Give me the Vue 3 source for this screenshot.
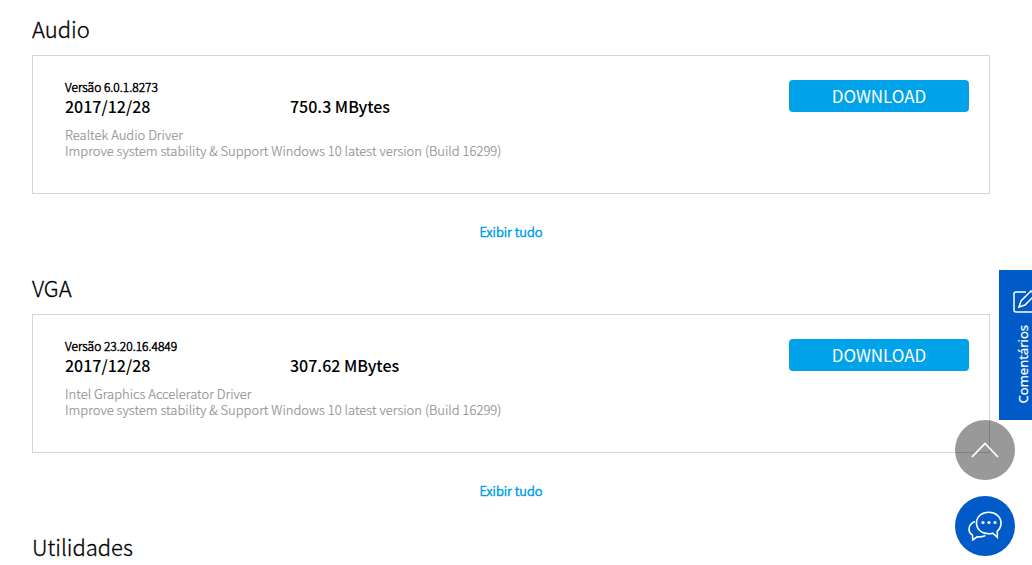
<script setup>
const sections = [
  {
    title: 'Audio',
    version: 'Versão 6.0.1.8273',
    date: '2017/12/28',
    size: '750.3 MBytes',
    name: 'Realtek Audio Driver',
    note: 'Improve system stability & Support Windows 10 latest version (Build 16299)',
  },
  {
    title: 'VGA',
    version: 'Versão 23.20.16.4849',
    date: '2017/12/28',
    size: '307.62 MBytes',
    name: 'Intel Graphics Accelerator Driver',
    note: 'Improve system stability & Support Windows 10 latest version (Build 16299)',
  },
]
</script>

<template>
  <main class="page">
    <section v-for="s in sections" :key="s.title" class="section">
      <h2 class="title">{{ s.title }}</h2>
      <article class="card">
        <div class="info">
          <p class="version">{{ s.version }}</p>
          <div class="meta">
            <span class="date">{{ s.date }}</span>
            <span>{{ s.size }}</span>
          </div>
          <p class="desc">{{ s.name }}<br />{{ s.note }}</p>
        </div>
        <button type="button" class="download">DOWNLOAD</button>
      </article>
      <a href="#" class="all">Exibir tudo</a>
    </section>
    <section>
      <h2 class="title">Utilidades</h2>
    </section>
  </main>

  <button type="button" class="feedback">
    <svg width="24" height="24" viewBox="0 0 24 24" fill="none" stroke="#fff" stroke-width="1.5" aria-hidden="true">
      <path d="M13 2H3Q1 2 1 4V20Q1 22 3 22H20Q22 22 22 20V12" />
      <path d="M6 17L8 11L18 1L22 5L12 15Z" />
    </svg>
    <span class="feedback-label">Comentários</span>
  </button>

  <button type="button" class="round top" aria-label="Voltar ao topo">
    <svg width="28" height="16" viewBox="0 0 28 16" fill="none" stroke="#fff" stroke-width="1.8" aria-hidden="true">
      <path d="M1 15L14 1.500L27 15" />
    </svg>
  </button>
  <button type="button" class="round chat" aria-label="Chat">
    <svg width="34" height="30" viewBox="0 0 34 30" fill="none" stroke="#fff" stroke-width="1.600" aria-hidden="true">
      <path d="M29.300 20.200C31.600 18.200 33 15.200 33 12C33 5.800 27.700 1.200 20.700 1.200S8.500 5.800 8.500 12S13.700 22.800 20.700 22.800C22.200 22.800 23.500 22.600 24.700 22.200L29.300 26.200Z" />
      <path d="M7 10.500C3.300 12 1 14.700 1 18.200C1 20.800 2.200 22.700 4.400 24.200L4.900 29L9.500 25.700C12.500 26.100 15.300 25.700 17.300 24.500" />
      <g fill="#fff" stroke="none">
        <circle cx="15" cy="11.500" r="1.600" />
        <circle cx="21" cy="11.500" r="1.600" />
        <circle cx="27" cy="11.500" r="1.600" />
      </g>
    </svg>
  </button>
</template>

<style>
body {
  background: #fff;
  overflow: hidden;
}
</style>

<style scoped>
.page {
  padding: 10px 42px 0 32px;
  font-family: "Noto Sans CJK SC", "Open Sans", sans-serif;
  color: #000;
}
.section {
  display: flex;
  flex-direction: column;
  height: 259px;
}
.title {
  margin: 0 0 9px;
  font-size: 22px;
  line-height: 36px;
  font-weight: 300;
  -webkit-text-stroke: 0.3px;
}
.card {
  display: flex;
  justify-content: space-between;
  align-items: flex-start;
  box-sizing: border-box;
  min-height: 139px;
  padding: 24px 20px 24px 32px;
  border: 1px solid #d5d5d5;
}
.version {
  margin: 0;
  font-size: 12px;
  line-height: 14px;
  font-weight: 300;
  -webkit-text-stroke: 0.5px;
}
.meta {
  display: flex;
  font-size: 16px;
  line-height: 24px;
  font-weight: 500;
}
.date {
  width: 225px;
}
.desc {
  margin: 9px 0 0;
  font-size: 13px;
  line-height: 16px;
  font-weight: 300;
  -webkit-text-stroke: 0.2px;
  color: #949494;
}
.download {
  width: 180px;
  height: 32px;
  padding: 0;
  border: 0;
  border-radius: 4px;
  background: #00a2ea;
  color: #fff;
  font-family: inherit;
  font-size: 17px;
  line-height: 30px;
}
.all {
  align-self: center;
  margin-top: 28px;
  font-size: 13px;
  line-height: 20px;
  font-weight: 300;
  -webkit-text-stroke: 0.6px;
  color: #00a2ea;
  text-decoration: none;
}
.feedback {
  position: fixed;
  top: 270px;
  right: 0;
  display: flex;
  flex-direction: column;
  align-items: flex-start;
  gap: 11px;
  box-sizing: border-box;
  width: 33px;
  height: 150px;
  padding: 20px 0 0 14px;
  border: 0;
  overflow: hidden;
  background: #005bc8;
  color: #fff;
}
.feedback svg {
  flex: none;
}
.feedback-label {
  writing-mode: vertical-rl;
  transform: rotate(180deg);
  font-family: "Noto Sans", sans-serif;
  font-size: 13px;
  -webkit-text-stroke: 0.2px;
  line-height: 20px;
}
.round {
  position: fixed;
  right: 17px;
  display: flex;
  align-items: center;
  justify-content: center;
  width: 60px;
  height: 60px;
  padding: 0;
  border: 0;
  border-radius: 50%;
}
.top {
  bottom: 85px;
  background: rgba(0, 0, 0, 0.4);
}
.chat {
  bottom: 9px;
  background: #005bc8;
}
</style>
